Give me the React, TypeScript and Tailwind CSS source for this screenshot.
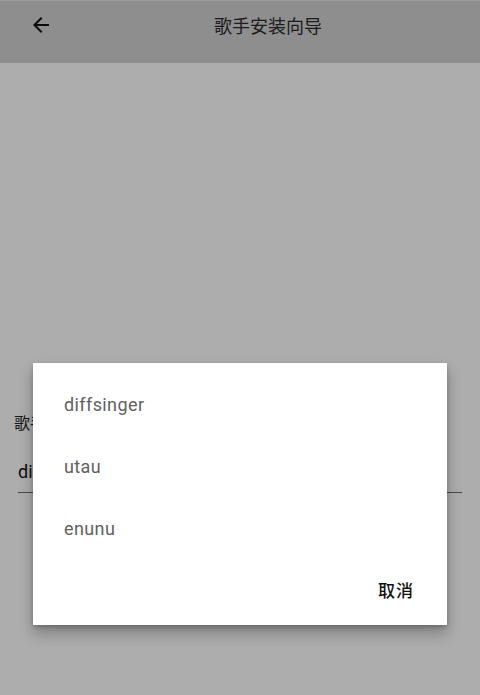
import React from 'react';

const cjk = '"Noto Sans CJK SC", "Noto Sans", sans-serif';
const latin = 'Roboto, "Noto Sans CJK SC", sans-serif';

const singerTypes = ['diffsinger', 'utau', 'enunu'];

function BackArrow() {
  return (
    <svg width="24" height="24" viewBox="0 0 24 24" fill="currentColor">
      <path d="M20 11H7.83l5.59-5.59L12 4l-8 8 8 8 1.41-1.41L7.83 13H20v-2z" />
    </svg>
  );
}

export default function App() {
  return (
    <div className="relative w-[480px] h-[695px] overflow-hidden bg-white" style={{ fontFamily: cjk }}>
      {/* page under the dialog */}
      <div className="flex items-start h-[63px] bg-[#d1d1d1] border-t border-[#e4e4e4]">
        <div className="w-[56px] pt-[12px]">
          <button className="ml-[29px] text-[#111] block">
            <BackArrow />
          </button>
        </div>
        <div className="flex-1 text-center text-[18px] leading-[28px] pt-[10px] text-[#2c2c2c]">歌手安装向导</div>
      </div>

      <div className="pt-[347px] px-[14px]">
        <div className="text-[16px] text-[#222] leading-[24px]">歌手类型</div>
        <div className="mt-[24px] ml-[4px] w-[444px] border-b border-[#6a6a6a] pb-[6px]">
          <span className="text-[18px] text-[#111] leading-[28px]" style={{ fontFamily: latin }}>
            diffsinger
          </span>
        </div>
      </div>

      {/* scrim */}
      <div className="absolute inset-0 bg-black/[0.32]" />

      {/* dialog */}
      <div className="absolute left-[33px] top-[363px] w-[414px] h-[262px] bg-white shadow-[0_8px_14px_rgba(0,0,0,0.28),0_2px_4px_rgba(0,0,0,0.2)] flex flex-col">
        <div className="pt-[10px]">
          {singerTypes.map(t => (
            <div
              key={t}
              className="h-[62px] flex items-center pl-[31px] text-[18px] text-[#616161] tracking-[0.4px]"
              style={{ fontFamily: latin }}
            >
              {t}
            </div>
          ))}
        </div>
        <div className="flex-1 flex items-center justify-end pr-[33px] pb-[4px]">
          <button className="text-[17px] font-medium text-[#111] tracking-[1px]">取消</button>
        </div>
      </div>
    </div>
  );
}
